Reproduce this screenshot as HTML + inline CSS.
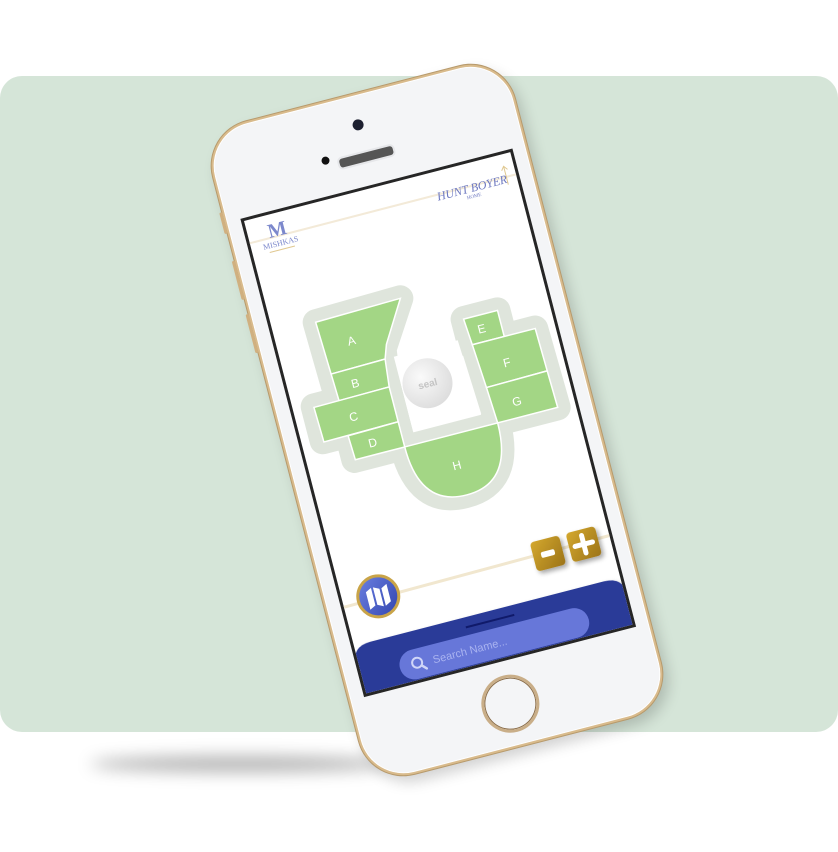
<!DOCTYPE html>
<html><head><meta charset="utf-8"><style>
html,body{margin:0;padding:0;background:#fff;width:838px;height:852px;overflow:hidden;position:relative;font-family:"Liberation Sans",sans-serif}
.bg{position:absolute;left:0;top:76px;width:838px;height:656px;background:#d5e5d8;border-radius:22px}
.shadow{position:absolute;left:90px;top:756px;width:300px;height:16px;border-radius:50%;background:rgba(0,0,0,.3);filter:blur(8px)}
.phone{position:absolute;left:281px;top:83px;width:312px;height:674px;transform:rotate(-14.5deg);border-radius:46px;background:#f4f5f7;box-sizing:border-box;border:2px solid #d9bb8c;box-shadow:0 0 0 1px #b79a6c,inset 0 0 0 1px #fff,4px 8px 14px rgba(0,0,0,.18)}
.cam{position:absolute;left:146px;top:24px;width:11px;height:11px;border-radius:50%;background:#1d2030}
.dot{position:absolute;left:107px;top:52px;width:8px;height:8px;border-radius:50%;background:#111}
.spk{position:absolute;left:122px;top:56px;width:55px;height:9px;border-radius:5px;background:#555;border:2px solid #e6e7ea}
.home{position:absolute;left:125px;top:599px;width:52px;height:52px;border-radius:50%;border:3px solid #c9ae88;box-shadow:inset 0 0 0 1px #8a6d4a;background:#f4f5f7}
.btn{position:absolute;left:-5px;width:3px;background:#d0b080;border-radius:2px}
.screen{position:absolute;left:13.5px;top:91px;width:281px;height:494px;box-sizing:border-box;border:3px solid #262626;background:#fff;overflow:hidden}
.screen svg{position:absolute;left:-3px;top:-3px}
</style></head><body>
<div class="bg"></div>
<div class="shadow"></div>
<div class="phone">
 <div class="btn" style="top:80px;height:22px"></div>
 <div class="btn" style="top:130px;height:40px"></div>
 <div class="btn" style="top:185px;height:40px"></div>
 <div class="cam"></div><div class="dot"></div><div class="spk"></div>
 <div class="screen">
 <svg width="281" height="494" viewBox="0 0 281 494" xmlns="http://www.w3.org/2000/svg">
  <defs>
   <linearGradient id="gold" x1="0" y1="0" x2="1" y2="1"><stop offset="0" stop-color="#d4a82e"/><stop offset="1" stop-color="#9c7419"/></linearGradient>
   <linearGradient id="blu" x1="0" y1="0" x2="1" y2="1"><stop offset="0" stop-color="#6b7fe0"/><stop offset="1" stop-color="#3346b0"/></linearGradient>
   <radialGradient id="seal" cx=".4" cy=".35" r=".7"><stop offset="0" stop-color="#fafafa"/><stop offset="1" stop-color="#dcdcdc"/></radialGradient>
   <filter id="sh" x="-50%" y="-50%" width="200%" height="200%"><feDropShadow dx="2" dy="3" stdDeviation="2.5" flood-opacity=".35"/></filter>
  </defs>
  <line x1="0" y1="26" x2="281" y2="26" stroke="#f3ead8" stroke-width="2"/>
  <text x="33" y="26" text-anchor="middle" font-family="Liberation Serif,serif" font-size="20" font-weight="bold" fill="#7c88cc">M</text>
  <text x="33" y="36" text-anchor="middle" font-family="Liberation Serif,serif" font-size="8" fill="#7c88cc">MISHKAS</text>
  <line x1="20" y1="40" x2="46" y2="40" stroke="#e0c890" stroke-width="1"/>
  <text x="232" y="32" text-anchor="middle" font-family="Liberation Serif,serif" font-style="italic" font-size="12" fill="#6d78c0">HUNT BOYER</text>
  <text x="232" y="38" text-anchor="middle" font-family="Liberation Serif,serif" font-size="5" fill="#6d78c0">HOME</text>
  <path d="M268 34 V16 M265 19 L268 15 L271 19" stroke="#e0c890" fill="none" stroke-width="1"/>
  <g stroke="#dfe5dc" stroke-width="26" stroke-linejoin="round" fill="#dfe5dc">
   <path d="M47 119 L135 117 L106 162 L101 200 L101 262 L50 262 L50 236 L24 236 L24 200 L49 200 Z"/>
   <path d="M191 153 L226 153 L226 180 L258 180 L260 262 L198 262 L194 180 L191 180 Z"/>
   <path d="M100 262 L198 262 Q198 324 149 324 Q100 324 100 262 Z"/>
  </g>
  <path d="M114 172 L180 172 L184 250 L114 250 Z" fill="#fff"/>
  <g fill="#a3d685" stroke="#fff" stroke-width="1.5">
   <path d="M47 119 L135 117 L110 158 L105 172 L49 173 Z"/>
   <path d="M49 173 L105 172 L102 200 L50 201 Z"/>
   <path d="M24 201 L102 200 L102 236 L25 237 Z"/>
   <path d="M50 237 L102 236 L102 262 L51 262 Z"/>
   <path d="M191 153 L226 153 L226 180 L193 180 Z"/>
   <path d="M193 180 L258 180 L259 224 L196 225 Z"/>
   <path d="M196 225 L259 224 L260 262 L198 262 Z"/>
   <path d="M102 262 L198 262 Q198 324 150 324 Q102 324 102 262 Z"/>
  </g>
  <g fill="#fff" font-family="Liberation Sans,sans-serif" font-size="12" text-anchor="middle">
   <text x="77" y="150">A</text><text x="70" y="192">B</text><text x="60" y="224">C</text><text x="72" y="254">D</text>
   <text x="206" y="171">E</text><text x="222" y="210">F</text><text x="222" y="250">G</text><text x="148" y="297">H</text>
  </g>
  <circle cx="140" cy="206" r="25" fill="url(#seal)"/>
  <text x="140" y="210" text-anchor="middle" font-size="10" font-weight="bold" fill="#c4c4c4">seal</text>
  <line x1="0" y1="402" x2="281" y2="399" stroke="#f1e7cf" stroke-width="3"/>
  <g filter="url(#sh)">
   <rect x="199" y="386" width="30" height="30" rx="4" fill="url(#gold)"/>
   <rect x="236" y="386" width="30" height="30" rx="4" fill="url(#gold)"/>
  </g>
  <rect x="207" y="398" width="14" height="6" rx="2" fill="#fff"/>
  <path d="M251 392 V410 M242 401 H260" stroke="#fff" stroke-width="5" stroke-linecap="round"/>
  <circle cx="39" cy="400" r="22" fill="#c9a448"/>
  <circle cx="39" cy="400" r="19" fill="url(#blu)"/>
  <path d="M28 393 L34 390 L34 408 L28 411 Z M36 390 L42 393 L42 411 L36 408 Z M44 393 L50 390 L50 408 L44 411 Z" fill="#fff"/>
  <path d="M0 462 Q0 442 20 442 L261 442 Q281 442 281 462 L281 494 L0 494 Z" fill="#2a3a98" filter="url(#sh)"/>
  <line x1="116" y1="452" x2="166" y2="452" stroke="#101a6a" stroke-width="2"/>
  <rect x="42" y="460" width="195" height="30" rx="15" fill="#6777d9"/>
  <circle cx="60" cy="474" r="5" fill="none" stroke="#d0d6f8" stroke-width="2"/>
  <line x1="64" y1="478" x2="68" y2="482" stroke="#d0d6f8" stroke-width="2.4" stroke-linecap="round"/>
  <text x="76" y="479" font-size="11" fill="#a9b3f0">Search Name...</text>
 </svg>
 </div>
 <div class="home"></div>
</div>
</body></html>
